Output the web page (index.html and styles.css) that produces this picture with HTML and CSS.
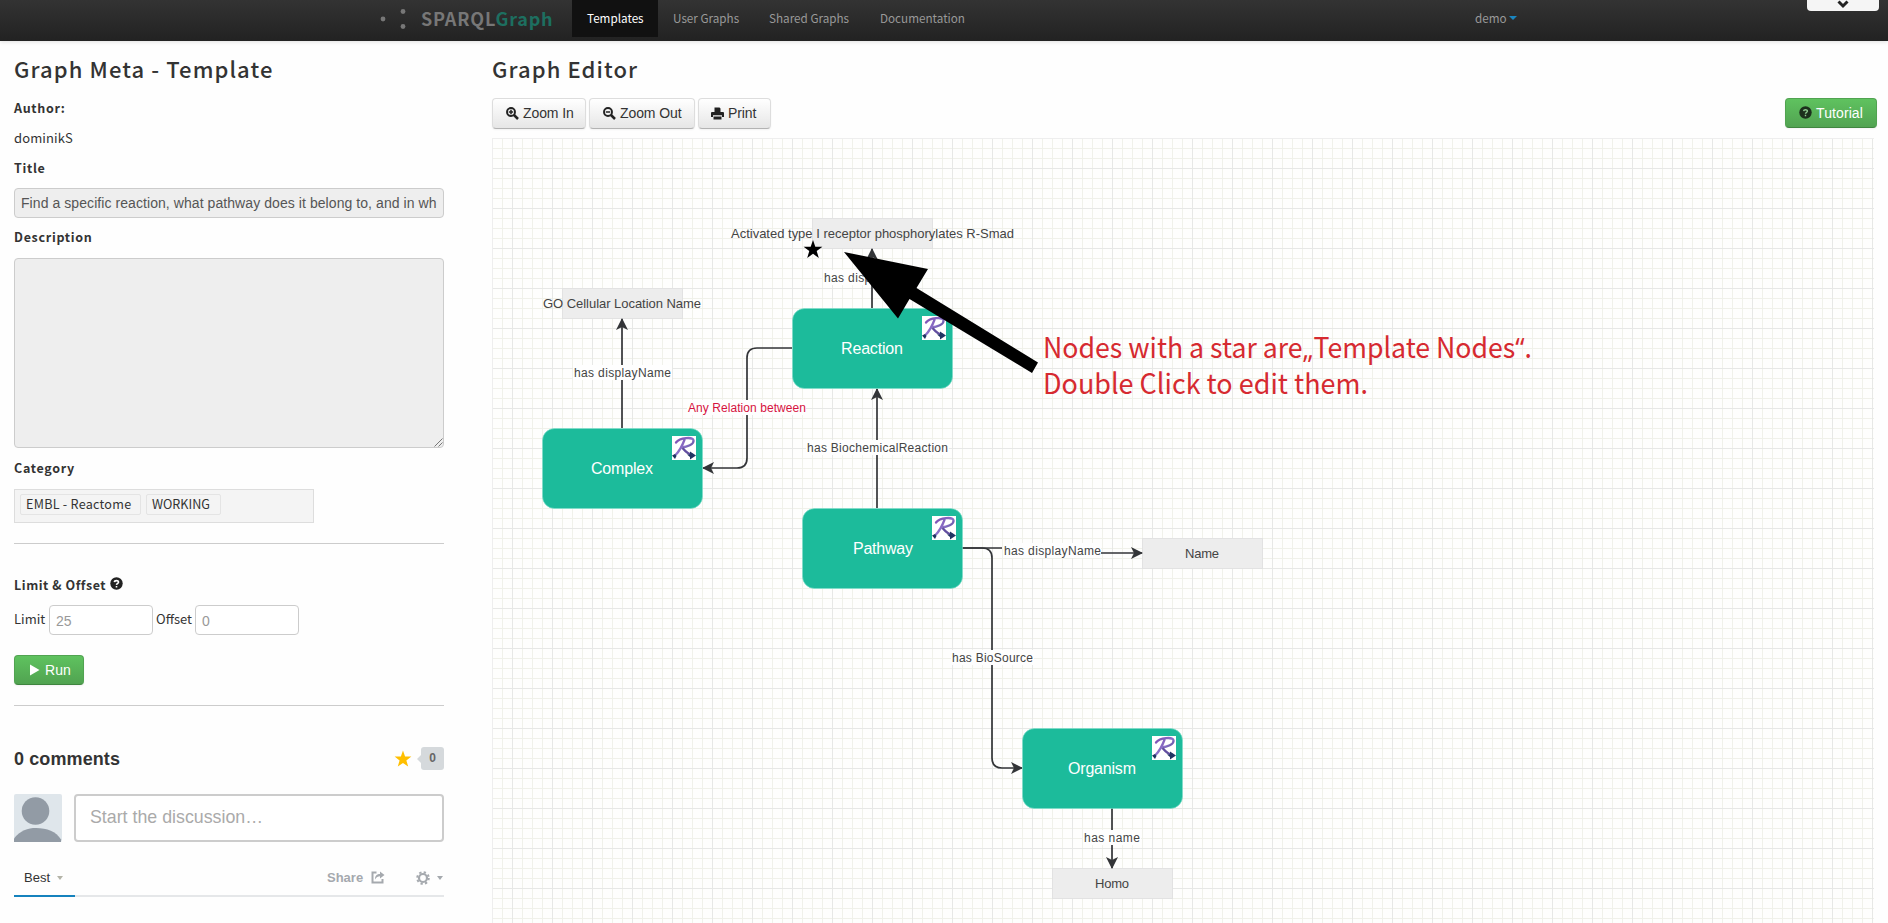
FILE: index.html
```html
<!DOCTYPE html>
<html lang="en">
<head>
<meta charset="utf-8">
<title>SPARQLGraph</title>
<link rel="stylesheet" href="styles.css">
</head>
<body>
<header class="navbar">
  <svg class="logo" width="30" height="26" viewBox="0 0 30 26"><g fill="#777"><circle cx="3" cy="13" r="2.4"/><circle cx="23" cy="5.5" r="2.4"/><circle cx="23" cy="20.500" r="2.4"/></g></svg>
  <a class="brand">SPARQL<span class="brand-accent">Graph</span></a>
  <nav class="menu">
    <a class="menu-item active w-templates">Templates</a>
    <a class="menu-item w-user">User Graphs</a>
    <a class="menu-item w-shared">Shared Graphs</a>
    <a class="menu-item w-docs">Documentation</a>
  </nav>
  <a class="account">demo<i class="caret"></i></a>
  <div class="pull-tab"><svg width="14" height="10" viewBox="0 0 14 10"><path d="M2.500 1.500 7 6l4.500-4.500" fill="none" stroke="#222" stroke-width="3"/></svg></div>
</header>

<main class="page">
  <aside class="meta">
    <h1 class="heading">Graph Meta - Template</h1>
    <h2 class="label">Author:</h2>
    <p class="author">dominikS</p>
    <h2 class="label">Title</h2>
    <div class="field title-field"><span class="clip">Find a specific reaction, what pathway does it belong to, and in wh</span></div>
    <h2 class="label desc-label">Description</h2>
    <div class="field area"><svg width="10" height="10" viewBox="0 0 10 10"><path d="M1.500 9.500 9.500 1.500M5.500 9.500l4-4" stroke="#777" fill="none"/></svg></div>
    <h2 class="label cat-label">Category</h2>
    <div class="tags"><span class="tag tag-a">EMBL - Reactome</span><span class="tag tag-b">WORKING</span></div>
    <hr class="rule">
    <h2 class="label limits-label">Limit &amp; Offset
      <svg width="13" height="13" viewBox="0 0 13 13"><circle cx="6.500" cy="6.500" r="6.200" fill="#222"/><path d="M4.400 5.100C4.500 3.200 8.600 3.100 8.500 5.200 8.400 6.400 6.600 6.300 6.500 7.900M6.500 8.900v1.500" fill="none" stroke="#fff" stroke-width="1.600"/></svg>
    </h2>
    <div class="limits">
      <span class="limits-text lt-limit">Limit</span><span class="field number">25</span>
      <span class="limits-text lt-offset">Offset</span><span class="field number">0</span>
    </div>
    <a class="btn success run"><svg width="10" height="12" viewBox="0 0 10 12"><path d="M0 .5 9.500 6 0 11.500z" fill="#fff"/></svg>Run</a>
    <hr class="rule second">

    <section class="comments">
      <div class="comments-head">
        <h3 class="comments-count">0 comments</h3>
        <svg class="star" width="18" height="18" viewBox="0 0 18 18"><path d="M9 .5l2.100 5.900 6.300.2-5 3.800 1.800 6L9 12.900l-5.200 3.500 1.800-6-5-3.800 6.300-.2z" fill="#ffbf00"/></svg>
        <span class="votes"><i class="votes-tip"></i>0</span>
      </div>
      <div class="composer">
        <svg class="avatar" width="48" height="48" viewBox="0 0 48 48"><rect width="48" height="48" rx="2" fill="#dfe6eb"/><circle cx="21.500" cy="17" r="13.800" fill="#929ba5"/><path d="M0 44.500C6 36.500 14 34 22 34c11 0 20 3.500 25 11.500V48H0z" fill="#929ba5"/></svg>
        <div class="composer-box">Start the discussion…</div>
      </div>
      <div class="toolbar">
        <span class="sort">Best<i class="mini-caret"></i></span>
        <span class="share">Share</span>
        <svg class="share-icon" width="14" height="13" viewBox="0 0 14 13"><path d="M5.500 1.500h-4v10h10V8" fill="none" stroke="#a5a9ae" stroke-width="2"/><path d="M4 8.500C4 4.500 6 3 9 3V.5L13.500 4 9 7.500V5.300C7 5.300 5.300 6 4 8.500z" fill="#a5a9ae"/></svg>
        <svg class="gear" width="14" height="14" viewBox="0 0 14 14"><circle cx="7" cy="7" r="4" fill="none" stroke="#a5a9ae" stroke-width="2.200"/><circle cx="7" cy="7" r="5.800" fill="none" stroke="#a5a9ae" stroke-width="2" stroke-dasharray="2.300 2.255"/></svg>
        <i class="mini-caret gray"></i>
      </div>
    </section>
  </aside>

  <section class="editor">
    <h1 class="heading">Graph Editor</h1>
    <div class="actions">
      <a class="btn b-in"><svg width="13" height="13" viewBox="0 0 13 13"><circle cx="5" cy="5" r="4" fill="none" stroke="#222" stroke-width="1.900"/><path d="M8 8l4 4" stroke="#222" stroke-width="2.500"/><path d="M5 2.800v4.400M2.800 5h4.400" stroke="#222" stroke-width="1.500"/></svg>Zoom In</a>
      <a class="btn b-out"><svg width="13" height="13" viewBox="0 0 13 13"><circle cx="5" cy="5" r="4" fill="none" stroke="#222" stroke-width="1.900"/><path d="M8 8l4 4" stroke="#222" stroke-width="2.500"/><path d="M2.800 5h4.400" stroke="#222" stroke-width="1.500"/></svg>Zoom Out</a>
      <a class="btn b-print"><svg width="13" height="13" viewBox="0 0 13 13"><path d="M3.500 5V.5h5l1 1V5M0 6q0-1 1-1h11q1 0 1 1v4h-2V8.300H2V10H0z" fill="#222"/><path d="M2.500 9.500h8v3h-8z" fill="#222"/></svg>Print</a>
      <a class="btn success tutorial"><svg width="13" height="13" viewBox="0 0 13 13"><circle cx="6.500" cy="6.500" r="6.200" fill="#1c301c"/><path d="M4.600 5.100C4.700 3.300 8.500 3.200 8.400 5.200 8.300 6.400 6.600 6.300 6.500 7.800M6.500 8.800v1.400" fill="none" stroke="#8fc98f" stroke-width="1.400"/></svg>Tutorial</a>
    </div>
    <svg class="graph" width="1382" height="785" viewBox="492 138 1382 785">
      <defs>
        <pattern id="minor" x="512" y="168" width="10" height="10" patternUnits="userSpaceOnUse"><path d="M.5 0v10M0 .5h10" stroke="#f0f1ea" fill="none"/></pattern>
        <pattern id="major" x="512" y="168" width="40" height="40" patternUnits="userSpaceOnUse"><path d="M.5 0v40M0 .5h40" stroke="#e7e8e6" fill="none"/></pattern>
        <marker id="head" viewBox="0 0 12 12" refX="11" refY="6" markerWidth="12" markerHeight="12" markerUnits="userSpaceOnUse" orient="auto"><path d="M0 0 12 6 0 12 3 6z" fill="#333538"/></marker>
        <linearGradient id="ink" x1="0" y1="0" x2="1" y2="1"><stop offset="0" stop-color="#7a4bb0"/><stop offset=".5" stop-color="#8b70c8"/><stop offset="1" stop-color="#22336e"/></linearGradient>
        <g id="badge"><rect width="24" height="24" fill="#fff"/><path d="M4 6.500C8 1.500 21 .5 21.500 4.500 22 8.500 15 11 9.500 11.500M13 2.500C11 8 8 15 3 19.500" fill="none" stroke="url(#ink)" stroke-width="2.300" stroke-linecap="round"/><path d="M10.500 12C13 15 16 18.500 21 19" fill="none" stroke="#6350a0" stroke-width="2.400"/><path d="M18 15.500 24 19.500 18 23.500v-2.500l-3-2.500h3zM0 19.500l3-1.500 1.500 2L3 23z" fill="#203561"/></g>
      </defs>
      <rect x="492" y="138" width="1382" height="785" fill="#fefefd"/>
      <rect x="492" y="138" width="1382" height="785" fill="url(#minor)"/>
      <rect x="492" y="138" width="1382" height="785" fill="url(#major)"/>
      <path d="M492.500 923V138.500H1873.500" fill="none" stroke="#eee"/>

      <g class="literals">
        <rect x="562.500" y="288.500" width="120" height="30"/>
        <rect x="812.500" y="218.500" width="120" height="30"/>
        <rect x="1142.500" y="538.500" width="120" height="30"/>
        <rect x="1052.500" y="868.500" width="120" height="30"/>
      </g>
      <g class="edges">
        <path d="M622 428V319"/>
        <path d="M872 308V249"/>
        <path d="M877 508V389"/>
        <path d="M792 348H757Q747 348 747 358V458Q747 468 737 468H703"/>
        <path d="M962 548H1002M1100 553H1142"/>
        <path d="M962 548H982Q992 548 992 558V758Q992 768 1002 768H1022"/>
        <path d="M1112 808V868"/>
      </g>
      <g class="nodes">
        <rect x="542.500" y="428.500" width="160" height="80" rx="12"/>
        <rect x="792.500" y="308.500" width="160" height="80" rx="12"/>
        <rect x="802.500" y="508.500" width="160" height="80" rx="12"/>
        <rect x="1022.500" y="728.500" width="160" height="80" rx="12"/>
      </g>
      <use href="#badge" x="672" y="436"/>
      <use href="#badge" x="922" y="316"/>
      <use href="#badge" x="932" y="516"/>
      <use href="#badge" x="1152" y="736"/>
      <g class="node-text">
        <text x="591" y="474" textLength="62">Complex</text>
        <text x="841" y="354" textLength="62">Reaction</text>
        <text x="853" y="554" textLength="60">Pathway</text>
        <text x="1068" y="774" textLength="68">Organism</text>
      </g>
      <g class="backs">
        <rect x="573" y="365" width="99" height="15"/><rect x="823" y="270" width="99" height="15"/><rect x="687" y="400" width="119" height="15"/><rect x="806" y="440" width="143" height="15"/><rect x="1003" y="543" width="98" height="15"/><rect x="951" y="650" width="83" height="15"/><rect x="1083" y="830" width="58" height="15"/>
      </g>
      <g class="edge-text">
        <text x="574" y="377" textLength="97">has displayName</text>
        <text x="824" y="282" textLength="97">has displayName</text>
        <text class="any" x="688" y="412" textLength="118">Any Relation between</text>
        <text x="807" y="452" textLength="141">has BiochemicalReaction</text>
        <text x="1004" y="555" textLength="97">has displayName</text>
        <text x="952" y="662" textLength="81">has BioSource</text>
        <text x="1084" y="842" textLength="56">has name</text>
      </g>
      <g class="literal-text">
        <text x="543" y="308" textLength="158">GO Cellular Location Name</text>
        <text x="731" y="238" textLength="283">Activated type I receptor phosphorylates R-Smad</text>
        <text x="1185" y="558" textLength="34">Name</text>
        <text x="1095" y="888" textLength="34">Homo</text>
      </g>
      <path d="M813 240l2.300 6.700 7.100.1-5.700 4.300 2.100 6.800L813 253.800l-5.800 4.100 2.100-6.800-5.700-4.300 7.100-.1z"/>
      <path d="M844 252 928 269 916.500 288 1038 362.500 1032 373 909.500 299 898 318.500z"/>
      <g class="note">
        <text x="1043" y="358" textLength="489" lengthAdjust="spacingAndGlyphs">Nodes with a star are<tspan class="quote">„</tspan>Template Nodes<tspan class="quote">“</tspan>.</text>
        <text x="1043" y="394" textLength="325" lengthAdjust="spacingAndGlyphs">Double Click to edit them.</text>
      </g>
    </svg>
  </section>
</main>
</body>
</html>
```
FILE: styles.css
```css
* { box-sizing: border-box; }
body {
  margin: 0;
  height: 923px;
  overflow: hidden;
  background: #fefefe;
  color: #333;
  font: 13px/20px "Noto Sans CJK SC", "Noto Sans", sans-serif;
}
h1, h2, h3, p, hr { margin: 0; }

.navbar {
  position: relative;
  display: flex;
  height: 41px;
  padding-left: 380px;
  background: linear-gradient(#333, #222);
  box-shadow: 0 1px 4px rgba(0, 0, 0, .12);
  color: #999;
}
.logo { margin-top: 6px; }
.brand {
  width: 162px;
  padding-left: 11px;
  font-size: 18px;
  font-weight: bold;
  letter-spacing: .8px;
  line-height: 37px;
  color: #777;
  white-space: nowrap;
}
.brand-accent { color: #1d6f60; }
.menu { display: flex; }
.menu-item {
  height: 37px;
  padding-left: 15px;
  font-size: 11.7px;
  line-height: 35px;
  white-space: nowrap;
}
.menu-item.active { background: #111; color: #fff; }
.w-templates { width: 86px; }
.w-user { width: 96px; }
.w-shared { width: 111px; }
.w-docs { width: 610px; }
.account {
  display: flex;
  align-items: center;
  gap: 2px;
  height: 35px;
  font-size: 11.7px;
}
.caret { border: 4.5px solid transparent; border-top-color: #1a86c0; border-bottom: 0; }
.pull-tab {
  position: absolute;
  top: 0;
  right: 9px;
  width: 72px;
  height: 11px;
  border-radius: 0 0 4px 4px;
  background: #f5f5f5;
  text-align: center;
  line-height: 10px;
}

.page { display: flex; }
.meta { width: 478px; padding: 8px 34px 0 14px; }
.editor { width: 1396px; padding: 8px 0 0 14px; }
.heading {
  height: 40px;
  font-size: 22px;
  font-weight: 500;
  letter-spacing: 1.1px;
  line-height: 39px;
  white-space: nowrap;
}

.label {
  height: 30px;
  margin-top: 9px;
  font-size: 12.5px;
  font-weight: bold;
  letter-spacing: .7px;
  line-height: 20px;
}
.desc-label { height: 31px; }
.cat-label { height: 31px; margin-top: 10px; }
.author { height: 21px; letter-spacing: .1px; }
.field {
  display: block;
  height: 30px;
  border: 1px solid #ccc;
  border-radius: 4px;
  background: #eee;
  color: #555;
  font: 14px/28px "Liberation Sans", Arial, sans-serif;
}
.title-field { padding: 0 5px 0 6px; letter-spacing: .07px; }
.clip { display: block; overflow: hidden; white-space: nowrap; }
.area { display: flex; align-items: flex-end; justify-content: flex-end; height: 190px; }
.tags {
  display: flex;
  gap: 5px;
  width: 300px;
  height: 34px;
  padding: 4px 5px;
  border: 1px solid #ddd;
  background: #f4f4f4;
}
.tag {
  height: 21px;
  padding-left: 5px;
  border: 1px solid #e4e4e4;
  border-radius: 2px;
  font-size: 12.6px;
  line-height: 18px;
  white-space: nowrap;
}
.tag-a { width: 121px; letter-spacing: .25px; }
.tag-b { width: 75px; }
.rule { height: 1px; margin-top: 20px; border: 0; background: #ccc; }
.limits-label { display: flex; gap: 4px; height: 20px; margin-top: 31px; letter-spacing: .55px; }
.limits-label svg { margin-top: 2px; }
.limits { display: flex; margin-top: 10px; }
.limits-text { line-height: 27px; }
.lt-limit { width: 35px; }
.lt-offset { width: 42px; padding-left: 3px; }
.number { width: 104px; padding-left: 6px; background: #fff; color: #999; line-height: 30px; }

.btn {
  display: flex;
  align-items: center;
  gap: 4px;
  height: 31px;
  padding: 0 0 1px 13px;
  border: 1px solid #ddd;
  border-bottom-color: #b3b3b3;
  border-radius: 4px;
  background: linear-gradient(#fff, #e6e6e6);
  box-shadow: 0 1px 2px rgba(0, 0, 0, .05);
  font: 14px/20px "Liberation Sans", Arial, sans-serif;
  letter-spacing: -.1px;
  white-space: nowrap;
}
.success {
  border-color: #51a351 #51a351 #3f853f;
  background: linear-gradient(#5fc25f, #51a351);
  color: #fff;
  letter-spacing: .1px;
}
.run { width: 70px; height: 30px; margin-top: 20px; padding-left: 15px; gap: 5px; }
.rule.second { margin-top: 20px; }

.comments { font-family: "Liberation Sans", Arial, sans-serif; }
.comments-head { display: flex; align-items: center; height: 23px; margin-top: 41px; }
.comments-count { width: 380px; font-size: 18px; font-weight: bold; letter-spacing: .1px; }
.votes {
  position: relative;
  width: 23px;
  height: 23px;
  margin-left: 9px;
  border-radius: 3px;
  background: #d5d9dc;
  color: #666;
  font-size: 12px;
  font-weight: bold;
  line-height: 23px;
  text-align: center;
}
.votes-tip {
  position: absolute;
  left: -4px;
  top: 8px;
  border: 4px solid transparent;
  border-right-color: #d5d9dc;
  border-left: 0;
}
.star { margin-left: 1px; }
.composer { display: flex; gap: 12px; margin-top: 24px; }
.composer-box {
  width: 370px;
  height: 48px;
  padding-left: 14px;
  border: 2px solid #ccc;
  border-radius: 4px;
  background: #fff;
  color: #aaa;
  font-size: 17.8px;
  line-height: 43px;
}
.toolbar {
  display: flex;
  align-items: center;
  height: 40px;
  margin-top: 15px;
  padding-top: 3px;
  border-bottom: 2px solid #e5e7e9;
  color: #a5a9ae;
  font-size: 13px;
}
.sort {
  display: flex;
  align-items: center;
  gap: 7px;
  width: 61px;
  height: 37px;
  margin-top: 2px;
  padding-left: 10px;
  border-bottom: 2px solid #1582bd;
  color: #333;
}
.mini-caret { border: 3.5px solid transparent; border-top: 4px solid #b4b4a8; border-bottom: 0; }
.mini-caret.gray { margin-left: 7px; border-top-color: #a5a9ae; }
.share { width: 44px; margin-left: 252px; font-weight: bold; }
.gear { margin-left: 31px; }

.actions { display: flex; gap: 3px; height: 31px; margin-top: 9px; }
.b-in { width: 94px; }
.b-out { width: 106px; }
.b-print { width: 73px; padding-left: 12px; }
.tutorial { width: 92px; height: 30px; margin-left: auto; margin-right: -3px; }
.graph { display: block; margin-top: 9px; font-family: "Liberation Sans", Arial, sans-serif; }
.literals rect { fill: #ededed; stroke: #e2e2e2; }
.edges path { fill: none; stroke: #333538; stroke-width: 1.7; marker-end: url(#head); }
.nodes rect { fill: #1cbb9b; stroke: #7fe0cc; stroke-width: .6; }
.node-text text { fill: #fff; font-size: 16px; }
.backs rect { fill: #fefefe; }
.edge-text text { fill: #444; font-size: 12px; }
.edge-text .any { fill: #d6123f; }
.literal-text text { fill: #444; font-size: 13px; }
.note text { fill: #d62a30; font: 28px "Noto Sans CJK SC", "Noto Sans", sans-serif; }
.note .quote { font-family: "Open Sans", sans-serif; }
```
